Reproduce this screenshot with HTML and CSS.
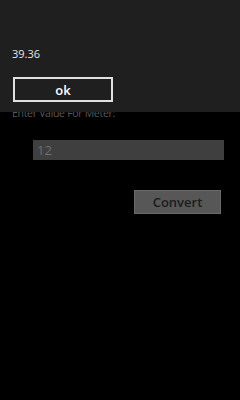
FILE: index.html
```html
<!DOCTYPE html>
<html lang="en">
<head>
    <meta charset="UTF-8">
    <meta name="viewport" content="width=device-width, initial-scale=1.0">
    <title>Meter Converter</title>
    <link rel="stylesheet" href="styles.css">
</head>
<body>
    <!-- Converter page -->
    <div class="page">
        <p class="label">Enter Value For Meter:</p>
        <div class="value-box">12</div>
        <div class="actions">
            <button class="convert-btn">Convert</button>
        </div>
    </div>

    <!-- Message box over the page -->
    <div class="message-box">
        <p class="result">39.36</p>
        <button class="ok-btn">ok</button>
    </div>
</body>
</html>
```

FILE: styles.css
```css
* {
    margin: 0;
    padding: 0;
    box-sizing: border-box;
}

body {
    background-color: #000;
    color: #fff;
    font-family: "Open Sans", "Noto Sans", sans-serif;
    width: 240px;
    height: 400px;
    position: relative;
    overflow: hidden;
}

/* Page */
.page {
    padding: 106px 0 0 12px;
}

.label {
    font-size: 10.5px;
    line-height: 14px;
    letter-spacing: -0.3px;
    color: #5a5a5a;
}

.value-box {
    margin: 20px 0 0 21px;
    width: 191px;
    height: 20px;
    background-color: #3f3f3f;
    color: #6e6e6e;
    font-size: 13px;
    line-height: 20px;
    padding-left: 4px;
}

.actions {
    display: flex;
    justify-content: flex-end;
    margin-top: 30px;
    padding-right: 19px;
}

.convert-btn {
    width: 87px;
    height: 24px;
    background-color: #575757;
    border: 1px solid #6a6a6a;
    color: #1c1c1c;
    font-family: "Open Sans", "Noto Sans", sans-serif;
    font-size: 13px;
    font-weight: 600;
}

/* Message box */
.message-box {
    position: absolute;
    top: 0;
    left: 0;
    right: 0;
    height: 112px;
    background-color: #1f1f1f;
    padding: 47px 0 0 12px;
}

.result {
    font-size: 11px;
    line-height: 14px;
    color: #e6e6e6;
}

.ok-btn {
    display: block;
    margin: 16px 0 0 1px;
    width: 100px;
    height: 25px;
    background: none;
    border: 2px solid #e0e0e0;
    color: #fff;
    font-family: "Open Sans", "Noto Sans", sans-serif;
    font-size: 13px;
    font-weight: 600;
}
```
